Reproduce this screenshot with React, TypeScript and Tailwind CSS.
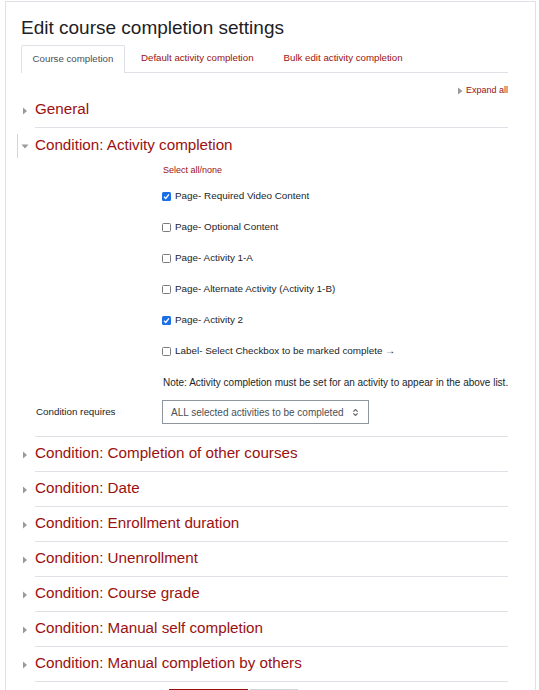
import { ChevronsUpDown } from "lucide-react";

const RED = "text-[#9a1111]";

const activities = [
  { label: "Page- Required Video Content", checked: true },
  { label: "Page- Optional Content", checked: false },
  { label: "Page- Activity 1-A", checked: false },
  { label: "Page- Alternate Activity (Activity 1-B)", checked: false },
  { label: "Page- Activity 2", checked: true },
  { label: "Label- Select Checkbox to be marked complete \u2192", checked: false },
];

const collapsedSections = [
  "Condition: Completion of other courses",
  "Condition: Date",
  "Condition: Enrollment duration",
  "Condition: Unenrollment",
  "Condition: Course grade",
  "Condition: Manual self completion",
  "Condition: Manual completion by others",
];

function Caret({ open = false }: { open?: boolean }) {
  return open ? (
    <svg width="8" height="8" viewBox="0 0 8 8" className="shrink-0">
      <path d="M0.5 2.5 L7.5 2.5 L4 6.5 Z" fill="#9a9a9a" />
    </svg>
  ) : (
    <svg width="8" height="8" viewBox="0 0 8 8" className="shrink-0">
      <path d="M2 0.5 L6 4 L2 7.5 Z" fill="#9a9a9a" />
    </svg>
  );
}

function Checkbox({ checked }: { checked: boolean }) {
  if (checked) {
    return (
      <span className="w-[9px] h-[9px] rounded-[1.5px] bg-[#1b6fe6] flex items-center justify-center shrink-0">
        <svg width="7" height="7" viewBox="0 0 8 8">
          <path d="M1.2 4.3 L3.2 6.2 L6.8 1.6" stroke="white" strokeWidth="1.6" fill="none" />
        </svg>
      </span>
    );
  }
  return <span className="w-[9px] h-[9px] rounded-[1.5px] border border-[#7a7a7a] bg-white shrink-0" />;
}

function SectionHeader({ title, open = false, divider = true }: { title: string; open?: boolean; divider?: boolean }) {
  return (
    <div className="flex">
      <div className="w-[14px] flex items-center">
        <Caret open={open} />
      </div>
      <div
        className={`flex-1 h-[35px] pb-[2px] flex items-center ${divider ? "border-b border-[#dee2e6]" : ""}`}
      >
        <span className={`text-[15.2px] ${RED} leading-none`}>{title}</span>
      </div>
    </div>
  );
}

export default function App() {
  return (
    <div className="min-h-screen bg-white pt-[1px] pl-[5px] pr-[3px] font-['Liberation_Sans',Arial,sans-serif] text-[#212529]">
      <div className="border border-[#dee2e6] border-b-0 h-[700px] pl-[15px] pr-[27px] pt-[14px]">
        <h2 className="text-[19px] leading-[24px] text-[#1d2125] font-normal">
          Edit course completion settings
        </h2>

        <div className="mt-[5px] flex h-[28px] border-b border-[#dee2e6] text-[9.7px]">
          <div className="w-[104px] -mb-px bg-white border border-b-0 border-[#dee2e6] rounded-t-[2px] flex items-center justify-center text-[#495057]">
            Course completion
          </div>
          <div className={`pl-[16px] pr-[16px] flex items-center ${RED}`}>Default activity completion</div>
          <div className={`pl-[14px] flex items-center ${RED}`}>Bulk edit activity completion</div>
        </div>

        <div className="h-[20px] flex justify-end items-start pt-[13px]">
          <span className={`flex items-center gap-[2px] text-[9px] leading-none ${RED}`}>
            <svg width="7" height="8" viewBox="0 0 7 8">
              <path d="M1 0.5 L5.5 4 L1 7.5 Z" fill="#9a9a9a" />
            </svg>
            Expand all
          </span>
        </div>

        <SectionHeader title="General" />

        <div className="relative">
          <span className="absolute left-[-4px] top-[6px] h-[24px] w-px bg-[#f0c8c8]" />
          <SectionHeader title="Condition: Activity completion" open divider={false} />
        </div>

        <div className="ml-[14px] border-b border-[#dee2e6] pb-[12px]">
          <div className="pl-[128px] h-[16px] flex items-center">
            <span className={`text-[9px] ${RED}`}>Select all/none</span>
          </div>
          <div className="mt-[2px] pl-[127px] flex flex-col">
            {activities.map((a) => (
              <div key={a.label} className="h-[31px] flex items-center gap-[4px]">
                <Checkbox checked={a.checked} />
                <span className="text-[9.9px]">{a.label}</span>
              </div>
            ))}
            <div className="h-[31px] flex items-center pl-px text-[10px] whitespace-nowrap">
              Note: Activity completion must be set for an activity to appear in the above list.
            </div>
          </div>
          <div className="mt-[2px] flex items-center">
            <span className="w-[127px] pl-[1px] text-[9.8px]">Condition requires</span>
            <div className="w-[207px] h-[24px] border border-[#8f959e] flex items-center pl-[8px] pr-[8px] justify-between text-[10px] text-[#495057]">
              <span>ALL selected activities to be completed</span>
              <ChevronsUpDown size={9} strokeWidth={3} className="text-[#6a6a6a]" />
            </div>
          </div>
        </div>

        {collapsedSections.map((t) => (
          <SectionHeader key={t} title={t} />
        ))}

        <div className="mt-[7px] flex gap-[2px] pl-[148px]">
          <div className="w-[79px] h-[30px] bg-[#990f0f]" />
          <div className="w-[48px] h-[30px] bg-[#ced4da]" />
        </div>
      </div>
    </div>
  );
}
